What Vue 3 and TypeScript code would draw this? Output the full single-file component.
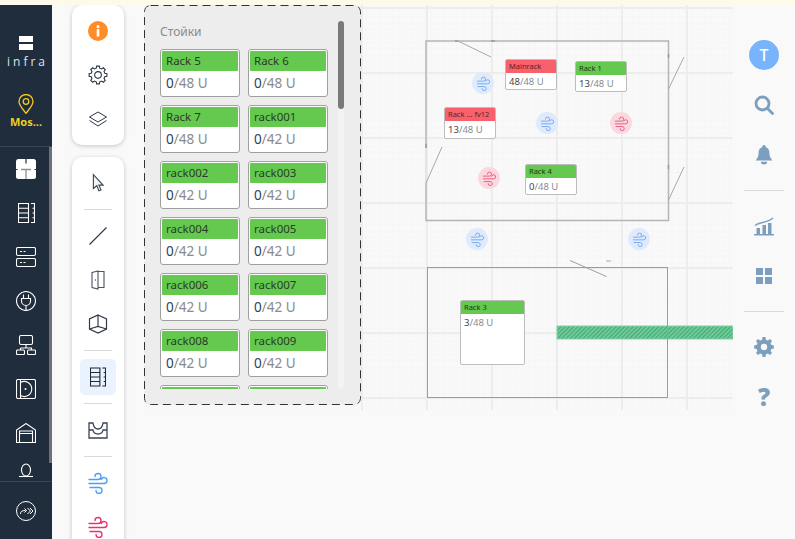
<script setup lang="ts">
interface RackCard { name: string; used: number; total: number }
interface MapRack extends RackCard { x: number; y: number; w: number; h: number; alert: boolean }

const racks: RackCard[] = [
  { name: 'Rack 5', used: 0, total: 48 }, { name: 'Rack 6', used: 0, total: 48 },
  { name: 'Rack 7', used: 0, total: 48 }, { name: 'rack001', used: 0, total: 42 },
  { name: 'rack002', used: 0, total: 42 }, { name: 'rack003', used: 0, total: 42 },
  { name: 'rack004', used: 0, total: 42 }, { name: 'rack005', used: 0, total: 42 },
  { name: 'rack006', used: 0, total: 42 }, { name: 'rack007', used: 0, total: 42 },
  { name: 'rack008', used: 0, total: 42 }, { name: 'rack009', used: 0, total: 42 },
  { name: '', used: 0, total: 0 }, { name: '', used: 0, total: 0 }
]
const mapRacks: MapRack[] = [
  { name: 'Mainrack', used: 48, total: 48, x: 505, y: 59, w: 52, h: 31, alert: true },
  { name: 'Rack 1', used: 13, total: 48, x: 575, y: 61, w: 52, h: 31, alert: false },
  { name: 'Rack ... fv12', used: 13, total: 48, x: 444, y: 107, w: 52, h: 32, alert: true },
  { name: 'Rack 4', used: 0, total: 48, x: 525, y: 164, w: 52, h: 31, alert: false },
  { name: 'Rack 3', used: 3, total: 48, x: 460, y: 300, w: 65, h: 65, alert: false }
]
const fans = [
  { x: 483, y: 83, hot: false }, { x: 547, y: 123, hot: false }, { x: 621, y: 123, hot: true },
  { x: 489, y: 178, hot: true }, { x: 477, y: 239, hot: false }, { x: 639, y: 239, hot: false }
]
const windPath = 'M2 7.5h9a3 3 0 1 0-3-3M2 11.5h15a3 3 0 1 0-2.8-4M3 15.5h9a3 3 0 1 1-3 3'
const vLines = [362, 427, 492, 557, 622, 687]
const hLines = [8, 73, 138, 203, 268, 333, 398]

function gearPath(c: number, rOut: number, rIn: number, hole: number, teeth: number): string {
  const step = (Math.PI * 2) / teeth
  const pts: string[] = []
  for (let i = 0; i < teeth; i++) {
    const a = i * step
    const add = (r: number, t: number) => {
      pts.push(`${(c + r * Math.cos(t)).toFixed(2)} ${(c + r * Math.sin(t)).toFixed(2)}`)
    }
    add(rIn, a - 0.32 * step)
    add(rOut, a - 0.19 * step)
    add(rOut, a + 0.19 * step)
    add(rIn, a + 0.32 * step)
  }
  return `M${pts.join('L')}ZM${c - hole} ${c}a${hole} ${hole} 0 1 0 ${hole * 2} 0a${hole} ${hole} 0 1 0 ${-hole * 2} 0Z`
}
const gearOutline = gearPath(10, 9, 7, 3.4, 8)
const gearSolid = gearPath(10, 10, 7.6, 3.2, 8)
</script>

<template>
  <div class="page">
    <div class="banner"></div>

    <div class="canvas">
      <svg class="plan" width="795" height="539" viewBox="0 0 795 539">
        <defs>
          <pattern id="fine" x="2" y="3" width="6.5" height="6.5" patternUnits="userSpaceOnUse">
            <path d="M6.5 0H0V6.5" fill="none" stroke="#f3f3f3" stroke-width="1" />
          </pattern>
          <pattern id="hatch" width="3" height="3" patternUnits="userSpaceOnUse" patternTransform="rotate(45)">
            <rect width="3" height="3" fill="#7ccb9f" />
            <rect width="1.3" height="3" fill="#3cae74" />
          </pattern>
        </defs>
        <rect x="144" y="5" width="589" height="405" fill="url(#fine)" />
        <line v-for="x in vLines" :key="'v' + x" :x1="x" :x2="x" y1="5" y2="410" stroke="#ededed" stroke-width="2" />
        <line v-for="y in hLines" :key="'h' + y" :y1="y" :y2="y" x1="144" x2="733" stroke="#ededed" stroke-width="2" />

        <path d="M426 41H668.500V220.500H426Z" fill="none" stroke="#b5b5b5" stroke-width="1.500" />
        <path d="M426 148v35" fill="none" stroke="#e4e4e4" stroke-width="2" />
        <path d="M455 41h3M491 41h4M668.500 54v4M668.500 165v4M426 144v4" fill="none" stroke="#9a9a9a" stroke-width="1.500" />
        <path d="M458 41l33 16M668.500 89l15.500-32M426 183l16-36M668.500 200l15.500-33" fill="none" stroke="#a8a8a8" stroke-width="1" />
        <path d="M576 261h30" stroke="#fcfcfc" stroke-width="1.500" />
        <path d="M570 260.500l36.500 16" fill="none" stroke="#a0a0a0" stroke-width="1" />
        <path d="M606 261h5" stroke="#aaa" stroke-width="1" />
        <rect x="557" y="326" width="176" height="13" fill="url(#hatch)" stroke="#7fd3a4" stroke-width="1" />
        <rect x="427.500" y="267.500" width="240" height="130" fill="none" stroke="#9c9c9c" stroke-width="1" />
      </svg>

      <div
        v-for="r in mapRacks"
        :key="r.name"
        class="map-rack"
        :style="{ left: r.x + 'px', top: r.y + 'px', width: r.w + 'px', height: r.h + 'px' }"
      >
        <div class="map-head" :class="{ alert: r.alert }">{{ r.name }}</div>
        <div class="map-body"><span class="dark">{{ r.used }}</span>/{{ r.total }} U</div>
      </div>

      <div
        v-for="(f, i) in fans"
        :key="i"
        class="fan"
        :class="{ hot: f.hot }"
        :style="{ left: f.x - 11 + 'px', top: f.y - 11 + 'px' }"
      >
        <svg width="15" height="15" viewBox="0 0 22 22"><path :d="windPath" /></svg>
      </div>
    </div>

    <div class="main">
      <aside class="sidebar">
        <div class="brand">
          <div class="logo"><span></span><span></span></div>
          <div class="logo-text">infra</div>
        </div>
        <div class="location">
          <svg width="16" height="20" viewBox="0 0 16 20" fill="none" stroke="#f2c925" stroke-width="1.300">
            <path d="M8 19.300C4.500 14.500 1 11.500 1 7.500a7 7 0 0 1 14 0c0 4-3.500 7-7 11.800Z" /><circle cx="8" cy="7.500" r="2.800" />
          </svg>
          <div class="location-name">Mos...</div>
        </div>
        <div class="nav-wrap">
          <div class="nav">
            <div class="nav-item">
              <svg width="20" height="20" viewBox="0 0 20 20"><rect width="20" height="20" rx="2.500" fill="#fff" /><path d="M5 10.500h10M10 10.500V20" stroke="#8b929a" stroke-width="1.300" fill="none" /><path d="M10 0v4.500M0 10.500h1.500M18.500 10.500H20" stroke="#202d3d" stroke-width="1.200" fill="none" /></svg>
            </div>
            <div class="nav-item">
              <svg width="17" height="20" viewBox="0 0 17 20" fill="none" stroke="#fff" stroke-width="1.100"><path d="M.5.500h10v19H.5zM.5 5.200h10M.5 10h10M.5 14.800h10M13 .5h3.500v19H13M16.500 5.200h-2M16.500 10h-2M16.500 14.800h-2" /></svg>
            </div>
            <div class="nav-item">
              <svg width="20" height="20" viewBox="0 0 20 20" fill="none" stroke="#fff" stroke-width="1.100"><rect x=".5" y=".5" width="19" height="8" rx="1.500" /><rect x=".5" y="11.500" width="19" height="8" rx="1.500" /><path d="M4 4.500h2M7.500 4.500h2M4 15.500h2M7.500 15.500h2" /></svg>
            </div>
            <div class="nav-item">
              <svg width="20" height="20" viewBox="0 0 20 20" fill="none" stroke="#fff" stroke-width="1.100"><circle cx="10" cy="10" r="9.500" /><path d="M7.500 3.500v4M12.500 3.500v4M5.500 7.500h9v2.500a4.500 4.500 0 0 1-9 0zM10 14.500v5" /></svg>
            </div>
            <div class="nav-item">
              <svg width="20" height="20" viewBox="0 0 20 20" fill="none" stroke="#fff" stroke-width="1.100"><rect x="3.500" y=".5" width="13" height="9" rx="1.500" /><path d="M10 9.500v3.500M4.500 13h11v2M4.500 13v2" /><rect x=".5" y="15" width="8" height="4.500" rx="1" /><rect x="11.500" y="15" width="8" height="4.500" rx="1" /></svg>
            </div>
            <div class="nav-item">
              <svg width="20" height="20" viewBox="0 0 20 20" fill="none" stroke="#fff" stroke-width="1.100"><rect x=".5" y=".5" width="19" height="19" rx="1.500" /><path d="M4.500.5v19M4.500 3.500A7.500 7.500 0 1 1 4.500 16.500" /><circle cx="9.500" cy="10" r="1" fill="#fff" stroke="none" /></svg>
            </div>
            <div class="nav-item">
              <svg width="20" height="20" viewBox="0 0 20 20" fill="none" stroke="#fff" stroke-width="1.100"><path d="M.5 19.500V7L10 .5 19.500 7v12.500zM3.500 19.500V8h13v11.500M3.500 10.500h13" /></svg>
            </div>
            <div class="nav-item partial">
              <svg width="16" height="18" viewBox="0 0 16 18" fill="none" stroke="#fff" stroke-width="1.100"><ellipse cx="8" cy="7" rx="4.500" ry="6" /><path d="M1 13.500h14" /></svg>
            </div>
          </div>
          <div class="nav-scroll"></div>
        </div>
        <div class="sidebar-foot">
          <svg width="20" height="20" viewBox="0 0 20 20" fill="none" stroke="#fff" stroke-width="1"><circle cx="10" cy="10" r="9.500" /><path d="M4.500 13c0-2.500 1.500-3.500 5-3.500M8.500 7.500l2 2-2 2M11.500 7l3 3-3 3M14 7l3 3-3 3" /></svg>
        </div>
      </aside>

      <div class="tools">
        <div class="tool-card">
          <div class="tool">
            <svg width="22" height="22" viewBox="0 0 22 22"><circle cx="11" cy="11" r="10" fill="#ff8c26" /><rect x="9.700" y="9" width="2.600" height="7.500" fill="#fff" /><rect x="9.700" y="5.300" width="2.600" height="2.600" fill="#fff" /></svg>
          </div>
          <div class="tool">
            <svg width="20" height="20" viewBox="0 0 20 20" fill="none" stroke="#2b3645" stroke-width="1.100"><path :d="gearOutline" /></svg>
          </div>
          <div class="tool">
            <svg width="20" height="16" viewBox="0 0 20 16" fill="none" stroke="#2b3645" stroke-width="1"><path d="M10 1l8.500 5-8.500 5-8.500-5zM1.500 9.500L10 15l8.500-5.500" /></svg>
          </div>
        </div>
        <div class="tool-card">
          <div class="tool">
            <svg width="12" height="20" viewBox="0 0 13 20" fill="#f2f3f4" stroke="#3c4654" stroke-width="1.200"><path d="M1.500 1v15l3.700-3 2.300 5.500 2.300-1-2.300-5.200h4.500z" /></svg>
          </div>
          <div class="sep"></div>
          <div class="tool">
            <svg width="18" height="18" viewBox="0 0 18 18"><path d="M.5 17.500L17.500.5" stroke="#2b3645" stroke-width="1.100" /></svg>
          </div>
          <div class="tool">
            <svg width="14" height="20" viewBox="0 0 14 20" fill="none" stroke="#4a5360" stroke-width="1.100"><path d="M1 2.500L7 1v18l-6-1.500zM7 1.500h6v16H7" /><circle cx="4.500" cy="10" r=".7" fill="#4a5360" stroke="none" /></svg>
          </div>
          <div class="tool">
            <svg width="20" height="20" viewBox="0 0 20 20" fill="none" stroke="#2f3a48" stroke-width="1.200"><path d="M10 1l8.500 4v10L10 19l-8.500-4V5zM10 1v11.500M1.500 15l8.500-2.500 8.500 2.500" /></svg>
          </div>
          <div class="sep"></div>
          <div class="tool active">
            <svg width="16" height="20" viewBox="0 0 17 20" fill="none" stroke="#1f2937" stroke-width="1.200"><path d="M.5.500h10v19H.5zM.5 5.200h10M.5 10h10M.5 14.800h10M13 .5h3.500v19H13M16.500 5.200h-2M16.500 10h-2M16.500 14.800h-2" /></svg>
          </div>
          <div class="sep"></div>
          <div class="tool">
            <svg width="20" height="17" viewBox="0 0 20 17" fill="none" stroke="#3a4452" stroke-width="1.300"><path d="M1 1h4c.5 4 2.500 6 5 6s4.500-2 5-6h4v15H1zM1 8h4c.5 3 2.500 4 5 4s4.500-1 5-4h4" /></svg>
          </div>
          <div class="sep"></div>
          <div class="tool wind blue">
            <svg width="22" height="22" viewBox="0 0 22 22"><path :d="windPath" /></svg>
          </div>
          <div class="tool wind red">
            <svg width="22" height="22" viewBox="0 0 22 22"><path :d="windPath" /></svg>
          </div>
        </div>
      </div>

      <section class="panel">
        <svg class="panel-outline" width="217" height="400" viewBox="0 0 217 400">
          <rect x=".5" y=".5" width="216" height="399" rx="6" fill="none" stroke="#333" stroke-width="1" stroke-dasharray="8 5" />
        </svg>
        <div class="panel-scroll"><div class="panel-thumb"></div></div>
        <h2 class="panel-title">Стойки</h2>
        <div class="rack-grid">
          <div v-for="(r, i) in racks" :key="i" class="rack">
            <div class="rack-head">{{ r.name }}</div>
            <div v-if="r.total" class="rack-body"><span class="dark-blue">{{ r.used }}</span>/{{ r.total }} U</div>
          </div>
        </div>
      </section>

      <div class="spacer"></div>

      <aside class="rail">
        <div class="avatar">T</div>
        <svg class="rail-icon search" width="20" height="20" viewBox="0 0 20 20" fill="none" stroke="#7d9fbf" stroke-width="2.800"><circle cx="8.500" cy="8.500" r="6.500" /><path d="M13.500 13.500l5 5" stroke-linecap="round" /></svg>
        <svg class="rail-icon bell" width="18" height="22" viewBox="0 0 20 22" fill="#7d9fbf"><circle cx="10" cy="2" r="2" /><path d="M10 2c4 0 6 2.500 6 6.500 0 4 1 6 3.500 8.500H.5C3 14.500 4 12.500 4 8.500 4 4.500 6 2 10 2Z" /><path d="M6.500 18.500h7a3.500 3 0 0 1-7 0Z" /></svg>
        <div class="rail-sep first"></div>
        <svg class="rail-icon chart" width="20" height="19" viewBox="0 0 20 19" fill="#7d9fbf"><rect x="2.500" y="11" width="3.500" height="6" /><rect x="8.500" y="8" width="3.500" height="9" /><rect x="14" y="6" width="3.500" height="11" /><rect y="17" width="20" height="1.500" /><path d="M1 8.500C6 4 12 7 19 1" fill="none" stroke="#7d9fbf" stroke-width="1.500" /></svg>
        <svg class="rail-icon grid" width="16" height="16" viewBox="0 0 16 16" fill="#7d9fbf"><rect width="7" height="7" /><rect x="9" width="7" height="7" /><rect y="9" width="7" height="7" /><rect x="9" y="9" width="7" height="7" /></svg>
        <div class="rail-sep second"></div>
        <svg class="rail-icon gear" width="20" height="20" viewBox="0 0 20 20" fill="#7d9fbf"><path fill-rule="evenodd" :d="gearSolid" /></svg>
        <div class="help">?</div>
      </aside>
    </div>
  </div>
</template>

<style>
html, body { margin: 0; padding: 0; overflow: hidden; background: #f9f9f9; }
</style>

<style scoped>
.page {
  position: relative;
  width: 795px;
  height: 539px;
  overflow: hidden;
  background: #f9f9f9;
  display: flex;
  flex-direction: column;
  font-family: "Noto Sans", "Open Sans", sans-serif;
}
.banner { height: 5px; background: #fff9ea; flex: none; position: relative; z-index: 1; }
.canvas { position: absolute; inset: 0; }
.plan { display: block; }
.main { position: relative; flex: 1; display: flex; min-height: 0; }

.sidebar {
  width: 52px;
  flex: none;
  background: #202d3d;
  display: flex;
  flex-direction: column;
  align-items: stretch;
}
.brand { padding-top: 31px; display: flex; flex-direction: column; align-items: center; height: 36px; }
.logo { display: flex; flex-direction: column; gap: 2px; }
.logo span { display: block; width: 14px; height: 6px; background: #fff; }
.logo-text { margin-top: 4px; color: #dfe3e8; font-size: 12px; letter-spacing: 3px; padding-left: 3px; line-height: 16px; font-family: "Open Sans", sans-serif; font-weight: 400; }
.location { margin-top: 22px; display: flex; flex-direction: column; align-items: center; height: 52px; }
.location-name { margin-top: 1px; font-size: 11px; font-weight: 700; line-height: 14px; color: #f0cf22; }
.nav-wrap { position: relative; flex: 1; min-height: 0; overflow: hidden; border-top: 1px solid #3a4655; }
.nav { display: flex; flex-direction: column; align-items: center; padding-top: 2px; }
.nav-item { height: 44px; width: 49px; flex: none; display: flex; align-items: center; justify-content: center; padding-bottom: 4px; box-sizing: border-box; }
.nav-item.partial { align-items: flex-start; padding-top: 6px; }
.nav-scroll { position: absolute; right: 0; top: 0; width: 3px; height: 316px; background: #6d7276; }
.sidebar-foot { height: 58px; flex: none; border-top: 1px solid #3a4655; display: flex; align-items: center; justify-content: center; box-sizing: border-box; }

.tools { width: 52px; margin: 0 20px; flex: none; display: flex; flex-direction: column; gap: 12px; }
.tool-card { background: #fff; border-radius: 10px; box-shadow: 0 1px 4px rgba(60, 70, 90, .28); padding: 4px 0; display: flex; flex-direction: column; align-items: center; flex: none; }
.tool { width: 36px; height: 44px; display: flex; align-items: center; justify-content: center; flex: none; }
.tool.active { height: 36px; background: #e9f2fd; border-radius: 5px; margin: 4px 0; }
.sep { width: 28px; height: 1px; background: #d9d9d9; margin: 4px 0; flex: none; }
.wind svg { fill: none; stroke-width: 1.400; stroke-linecap: round; }
.blue svg { stroke: #4e9ff5; }
.red svg { stroke: #e3366c; }

.panel {
  position: relative;
  width: 217px;
  height: 400px;
  flex: none;
  box-sizing: border-box;
  border-radius: 6px;
  background: #ededed;
  padding: 19px 0 0 16px;
  overflow: hidden;
}
.panel-outline { position: absolute; inset: 0; display: block; }
.panel-title { margin: 0 0 9px; font-size: 12px; line-height: 16px; font-weight: 400; color: #8a8a8a; }
.rack-grid { display: grid; grid-template-columns: 80px 80px; grid-auto-rows: 48px; column-gap: 8px; row-gap: 8px; height: 340px; overflow: hidden; }
.rack { height: 48px; box-sizing: border-box; border: 1px solid #a0a0a0; border-radius: 3px; background: #fff; padding: 1px; }
.rack-head { height: 20px; background: #64c94e; border-radius: 1px; font-size: 11.5px; line-height: 20px; color: #2a3b2a; padding-left: 4px; }
.rack-body { font-size: 13.5px; line-height: 24px; color: #8a8a8a; padding-left: 4px; }
.dark-blue { color: #2c3e60; }
.panel-scroll { position: absolute; top: 16px; right: 17px; width: 6px; height: 368px; background: #f3f3f3; border-radius: 3px; }
.panel-thumb { width: 6px; height: 88px; background: #7a7a7a; border-radius: 3px; }

.spacer { flex: 1; }
.rail { width: 62px; flex: none; display: flex; flex-direction: column; align-items: center; background: #f9f9f9; padding-top: 35px; box-sizing: border-box; }
.avatar { width: 30px; height: 30px; flex: none; border-radius: 50%; background: #78b4fb; color: #fff; font-size: 16px; font-weight: 500; line-height: 30px; text-align: center; }
.rail-icon { flex: none; display: block; }
.search { margin-top: 25px; }
.bell { margin-top: 29px; }
.rail-sep { width: 40px; height: 1px; flex: none; background: #d9d9d9; }
.rail-sep.first { margin-top: 24px; }
.chart { margin-top: 26px; }
.grid { margin-top: 32px; }
.rail-sep.second { margin-top: 27px; }
.gear { margin-top: 25px; }
.help { margin-top: 26px; font-size: 24px; line-height: 28px; font-weight: 800; color: #7d9fbf; font-family: "Open Sans", sans-serif; }

.map-rack { position: absolute; box-sizing: border-box; border: 1px solid #bdbdbd; border-radius: 2px; background: #fff; overflow: hidden; }
.map-head { height: 13px; background: #64c94e; color: #26331f; font-size: 7.5px; line-height: 13px; padding-left: 3px; white-space: nowrap; }
.map-head.alert { background: #f8616b; color: #5e2228; }
.map-body { font-size: 9.5px; line-height: 17px; color: #8a8a8a; padding-left: 3px; white-space: nowrap; }
.dark { color: #444; }
.fan { position: absolute; width: 22px; height: 22px; border-radius: 50%; background: #dfeafc; display: flex; align-items: center; justify-content: center; }
.fan svg { fill: none; stroke: #6aa6f0; stroke-width: 1.300; stroke-linecap: round; }
.fan.hot { background: #fbd8df; }
.fan.hot svg { stroke: #e5507c; }
</style>
